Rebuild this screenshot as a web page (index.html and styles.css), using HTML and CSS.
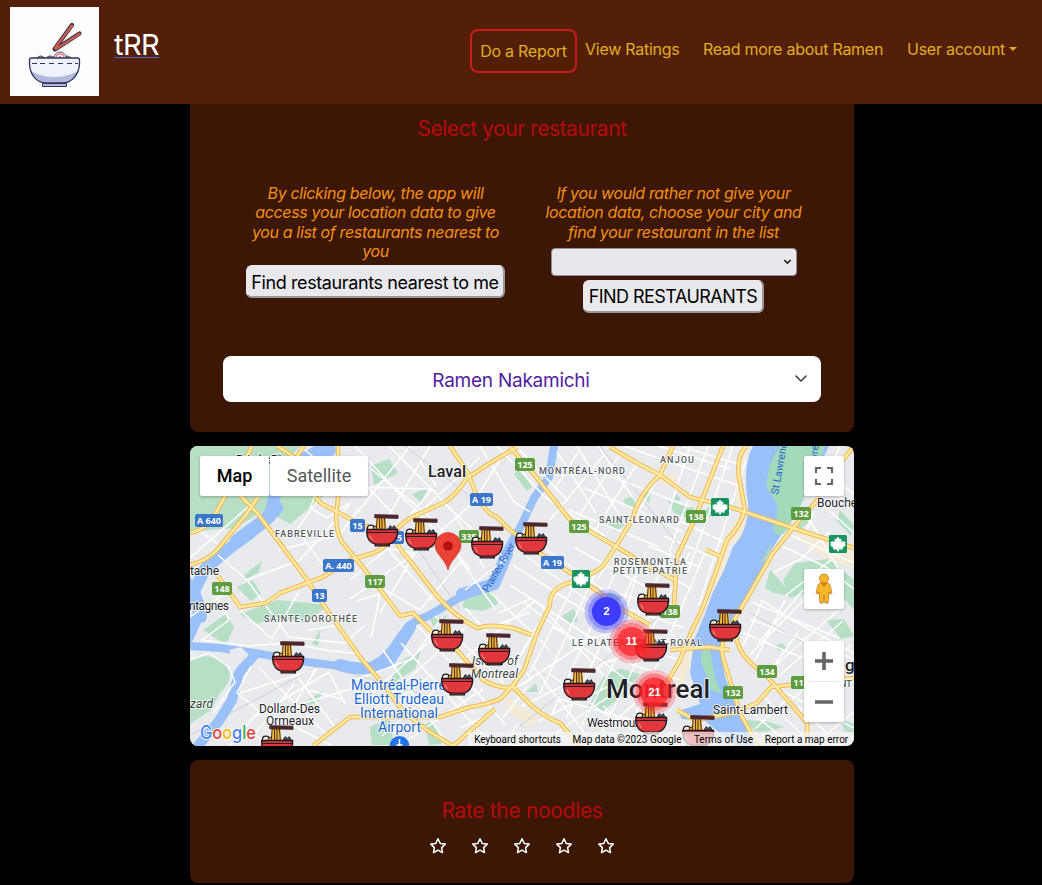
FILE: index.html
```html
<!DOCTYPE html>
<html lang="en">
<head>
<meta charset="utf-8">
<title>tRR</title>
<link rel="stylesheet" href="styles.css">
</head>
<body>
<header class="navbar">
  <a class="logo" href="#">
    <svg width="89" height="89" viewBox="0 0 89 89">
      <rect width="89" height="89" fill="#fdfdfd"/>
      <g stroke-linecap="round"><path d="M44.500 42L62 18M45 42.500L69.500 26.500" stroke="#343047" stroke-width="4.200"/><path d="M45 41L62 18.500M46 42L69.500 26.700" stroke="#ca5b4f" stroke-width="2.400"/></g>
      <path d="M27 51q3-4 8 0M36 51q4-4 9 0M54 51q3-4 7 0" fill="#9aa65f" stroke="#45496a" stroke-width="1"/>
      <circle cx="50" cy="51" r="6" fill="#fff" stroke="#59506d"/><path d="M46 51q0-4 4-4q4 0 4 4M48.500 51q1.500-3 3 0" fill="none" stroke="#e5808a" stroke-width="1.300"/>
      <path d="M19.500 53q0-2 2-2h46q2 0 2 2v4C69 68 61 76 53 76H36C27 76 20 68 19.500 57Z" fill="#eef3fb"/>
      <path d="M20 64Q44 76 69 64Q64 76 53 76H36Q24 75 20 64Z" fill="#b1b9dc"/>
      <path d="M19.500 53q0-2 2-2h46q2 0 2 2v4C69 68 61 76 53 76H36C27 76 20 68 19.500 57Z" fill="none" stroke="#2e345b" stroke-width="1.300"/>
      <path d="M32.500 76.500h24v3h-24z" fill="#b1b9dc" stroke="#2e345b"/><path d="M22 56.500h5m3 0h5m4 0h5m4 0h5m4 0h5m3 0h3" stroke="#2e345b"/>
    </svg>
  </a>
  <a class="brand" href="#">tRR</a>
  <nav class="links">
    <a class="link link-active" href="#">Do a Report</a>
    <a class="link l-ratings" href="#">View Ratings</a>
    <a class="link l-read" href="#">Read more about Ramen</a>
    <a class="link l-user" href="#">User account<i class="caret"></i></a>
  </nav>
</header>
<main class="content">
  <section class="card select-card">
    <h2 class="title">Select your restaurant</h2>
    <div class="choices">
      <div class="choice">
        <p class="hint">By clicking below, the app will access your location data to give you a list of restaurants nearest to you</p>
        <button class="btn btn-near">Find restaurants nearest to me</button>
      </div>
      <div class="choice">
        <p class="hint">If you would rather not give your location data, choose your city and find your restaurant in the list</p>
        <div class="city"><svg width="9" height="6" viewBox="0 0 9 6"><path d="M1.300 1l3.200 3.200L7.700 1" fill="none" stroke="#111" stroke-width="1.400"/></svg></div>
        <button class="btn btn-find">FIND RESTAURANTS</button>
      </div>
    </div>
    <div class="picker"><span class="picked">Ramen Nakamichi</span><svg width="12" height="8" viewBox="0 0 12 8"><path d="M1 1l5 5 5-5" fill="none" stroke="#343a40" stroke-width="1.500" stroke-linecap="round" stroke-linejoin="round"/></svg></div>
  </section>

  <section class="map">
    <svg class="tiles" width="664" height="300" viewBox="190 446 664 300">
      <defs>
        <symbol id="bowl" viewBox="0 0 34 34" overflow="visible">
          <circle cx="5" cy="15" r="3.600" fill="#f5efdf" stroke="#17191d" stroke-width="1.200"/><circle cx="10" cy="15" r="2.600" fill="#e6a532" stroke="#17191d"/>
          <path d="M22 17l3-5 2 2 2-2 3 5z" fill="#47556a" stroke="#17191d"/>
          <path d="M11 3h9l1 14H11z" fill="#f4b63e"/><path d="M11.500 4L10.500 17M14 4v13M16.500 4v13M19 4l1 13" stroke="#3c2511" stroke-width="1"/>
          <path d="M9 .700l24 .500v3.300L9 3.800z" fill="#672d33" stroke="#301a20" stroke-width=".9"/><path d="M10 2.200l22 .400" stroke="#301a20" stroke-width=".6"/>
          <path d="M.800 16h31.700v3.500C32 26 28 30 24 31v1.800H9.500V31C5 30 1 26 .800 19.500z" fill="#e0383d" stroke="#17191d" stroke-width="1.400"/><path d="M1 19h31" stroke="#17191d"/><path d="M10 31h14" stroke="#17191d" stroke-width="1.200"/><path d="M4 22q1 3 3 5" fill="none" stroke="#f49b98"/>
        </symbol>
        <symbol id="leaf" viewBox="0 0 18 18"><rect width="18" height="18" rx="1.500" fill="#17935f"/><path d="M9 2l1.500 2.500L12 4l-.3 4 2-2 .6 1.300 2-.2-.8 2 1 1-3.500 3 .3 1.200-3.600-.5V16H8.300v-2.200l-3.600.5.300-1.200-3.500-3 1-1-.8-2 2 .2.600-1.300 2 2L6 4l1.500.5z" fill="#fff" stroke="#fff" stroke-width=".8"/></symbol>
        <g id="roads">
          <path d="M252 446L240 470L210 523Q200 531 190 533"/><path d="M277 446L296 458L304 446"/><path d="M190 565Q208 560 217 550L245 516L258 497"/>
          <path d="M240 495L258 514L305 577L318 597L360 657L377 677L400 707Q414 721 427 730L453 746"/>
          <path d="M517 447L490 463L467 478Q456 495 445 502L410 518Q396 527 391 540Q382 550 373 553L350 560L323 577L280 593L266 603L240 607L218 576"/>
          <path d="M390 528Q398 549 411 562L433 591Q452 615 477 628Q494 623 520 630"/>
          <path d="M315 497L322 504L360 524L393 535"/>
          <path d="M338 446L338 500Q333 526 342 542L357 560L383 593L400 616L413 613L430 630L457 650L483 680Q500 690 517 687"/>
          <path d="M450 446L468 473L477 497Q487 514 497 517L510 530L541 554L577 577L600 593L623 610L650 625"/>
          <path d="M510 447L537 478L570 520L610 543L643 563L675 580"/>
          <path d="M610 447L637 463L660 475L690 497L730 507L793 528L854 548"/>
          <path d="M673 446L660 475Q638 495 633 518L620 540L603 566Q590 577 563 585Q549 592 550 605L537 633L524 670Q511 689 500 699Q485 705 470 707L440 717L350 717L313 746"/>
          <path d="M495 709L453 746M513 687L533 707Q548 719 560 723L580 746"/>
          <path d="M510 627L532 635"/>
          <path d="M820 497L793 528L773 553L750 593L730 627Q718 644 724 661L740 713L758 746"/>
          <path d="M747 446Q736 455 739 477L745 510Q740 527 727 540L713 580L703 607L690 635L680 660L658 698L639 718"/>
          <path d="M723 446L693 523L677 557L674 605"/>
          <path d="M736 635Q738 657 765 674L790 703L807 723V746"/><path d="M854 678L771 687L757 703L733 713L695 720L677 710"/>
          <path d="M670 650L709 647L730 650M706 550L722 557"/><path d="M854 446L831 475"/>
        </g>
      </defs>
      <rect x="190" y="446" width="664" height="300" fill="#e8eaed"/>
      <g fill="#b6dfc5">
        <path d="M190 446H300L290 458L325 495L290 524L265 510L235 528L205 530L190 535Z"/>
        <path d="M371 466l18-7 9 14-24 12zM412 494l16-6-7 14zM244 575l18-14-3 11-14 8zM237 587l16-7 8 14-10 7zM203 630l23-16 8 13-8 18zM240 614l38-14 50 5-22 18-29-6-20 7zM190 659Q214 650 229 670Q233 680 220 693L211 710L190 724Z"/>
        <path d="M400 662l21-12-6 19-28 18zM464 596l26-10 8 18-15 7-20-3zM430 619l18-4-14 13zM305 702l18-12-4 11-13 6zM312 644l9-16-3 18z"/>
        <path d="M593 699Q600 672 621 669L640 674L625 693L603 711L587 709ZM526 692l10-9 2 9zM562 616l12-7 4 12-10 3zM603 598l8-7 11 7-9 5zM608 525l13-7 3 8-9 5zM623 500l9-4 5 12-9-1zM643 496l8-7-2 15zM668 501l26 7-4 11-16-6zM672 503l5-9 4 6zM697 518l18-16 18 3-16 11zM645 561l9 3-5 11zM514 474l6-5 12 18-5 4z"/>
        <path d="M795 507l10 2 3 14-9 7zM770 570l13 14 8 12-17-3-9-5zM783 580l12-17 34-4 25 21V610l-12-14-25-6-28 8zM826 620l18-1 10 17-13 3zM840 510l14 15-3 11-14-15zM774 646l8-3 5 6-8 2zM744 720l25 2 15 5-26 7zM842 720l12 4v14l-10-8z"/>
        <path d="M370 727l18-8 7 26H372zM425 724l9-3 8 23-13 1z"/>
      </g>
      <g fill="#f4ead8"><path d="M748 446L741 480L745 510L738 520L754 526L728 547L729 567L713 590L697 617L690 665L682 687L675 680L690 636L704 600L723 540L739 516L733 480Z"/><path d="M791 528l12 5 51 19v17l-22-8-24-13zM506 694l16 14 18 11-7 8-27-15zM655 475l20-2 3 13-15-2z"/></g>
      <path d="M753 446Q742 466 748 503Q749 529 733 547L724 570L713 592Q703 620 694 640L690 673L700 704L678 711L682 719L705 721L736 746H754L749 732L726 680L720 652L731 626L752 592L767 557L803 500L829 446Z" fill="#9ac0fa"/>
      <g fill="none" stroke="#9ac0fa" stroke-linecap="round" stroke-linejoin="round">
        <path d="M324 446Q314 455 295 462Q282 472 275 494L270 516L249 534L226 551L205 569L194 591L199 613L187 639" stroke-width="12"/>
        <path d="M237 541L264 521L276 508" stroke-width="14"/>
        <path d="M190 646L220 648L255 653L300 661Q335 666 365 668Q383 663 395 645Q410 620 426 617L459 598Q481 589 494 580L508 548L520 528L534 498L549 477L554 446" stroke-width="8"/>
        <path d="M340 665Q370 674 390 660L410 627M462 594L494 584L507 554" stroke-width="12"/>
        <path d="M255 654L239 673L232 700L219 721L198 746" stroke-width="10"/>
        <path d="M185 580Q200 600 201 617M317 458l13-8" stroke-width="12"/>
      </g>
      <path d="M229 650l12-3 8 8-12 11zM225 656l9 4-3 8z" fill="#e8eaed"/>
      <path d="M780 446Q765 468 767 488L777 504Q779 512 773 530Q779 539 787 530L814 480L825 446ZM701 661Q701 643 710 650L715 678L722 694L711 690ZM760 563l12-21-3 11-6 9z" fill="#a4d9ba"/>
      <g fill="none" stroke="#fff" stroke-width="1.500" stroke-linejoin="round">
        <path d="M190 558L248 507M200 531L219 545M218 555L247 580L300 560L350 504M247 580L289 637L345 643L365 625M190 617L225 593M217 597L229 620L202 640L248 646L288 643L325 650L360 654M190 660L209 653L228 666L235 682L213 713M320 497L297 530L325 568M278 550L340 535L358 509M286 480L318 488L310 508L327 518L350 503M305 450L350 487L360 468M240 610L272 639L299 591M308 630L334 626"/>
        <path d="M251 666L237 693L259 711L230 745M240 693L316 669L293 706L270 737M259 668L302 710L327 735M256 716L329 672L345 704M297 676L334 726M309 690L345 700M250 740L294 684M243 728L273 746M304 703L361 686M275 717L331 745"/>
        <path d="M355 446L405 500L446 540L496 610M369 467L436 522L470 570M389 446L453 511L484 568M410 446L352 519M430 446L374 540M359 487L432 489L385 546L433 600M350 599L422 548L474 502L505 451M378 586L420 610L462 560M436 486L420 461M350 469L400 521M416 516L480 457M440 500L506 559L465 590M350 580L387 549L415 553L380 613M357 601L380 594L371 638"/>
        <path d="M350 682L412 659L443 616M383 650L446 742M401 643L485 738M417 625L506 725M435 616L504 683M362 702L437 635M370 713L465 628M382 736L470 660M399 746L483 689M404 695L433 674M442 680L474 713M459 663L536 600M465 608L532 679M490 592L550 650M498 613L530 599M482 631L530 612"/>
        <path d="M480 446L514 502L530 512M497 446L546 498L605 536M520 450L568 501M557 452L596 513M577 446L620 516M598 446L633 498M618 457L581 513M637 464L592 535M659 477L598 579M555 489L578 452M550 520L603 456M569 510L659 547M584 488L637 510L683 532M600 472L690 507M624 446L667 461L740 486M658 446L731 469M690 446L668 515M708 446L669 552M733 446L688 572M746 460L699 605M683 447L742 465"/>
        <path d="M533 540L604 590L652 603M526 556L618 622L675 636M513 565L646 650L680 660M510 585L633 665L680 680M523 602L640 690L693 697M542 607L604 676M556 594L520 656M577 579L530 673M599 565L540 694M619 564L551 716M646 552L566 718M671 552L582 725M690 552L602 732M704 555L635 716M575 548L668 599M623 555L693 589M649 546L701 568M664 536L716 559M680 521L726 543M638 570L621 629L582 642L552 627M657 583L640 650L596 666"/>
        <path d="M532 665L590 740M518 687L595 636M522 706L603 666M538 721L609 686M553 735L627 684M560 699L655 727M550 674L615 721M603 706L640 737M610 726L638 700M516 725L506 746M503 718L527 687M467 735L520 746M460 728L491 714M630 609L685 628M616 625L689 648"/>
        <path d="M761 600L794 621L854 653M750 619L808 642L854 659M741 632L800 657M751 602L839 638M780 545L826 567L854 589M790 535L854 563M803 508L839 570M819 501L854 533M774 572L801 559L829 532M785 596L831 560M757 645L803 590M750 655L827 576M769 671L842 607M780 675L843 621M792 700L851 645M803 722L854 679M820 739L854 712M743 646L762 602M755 661L785 600M765 678L799 631M780 690L854 728M798 706L841 746M763 696L806 739M747 708L780 736L798 746M755 729L786 700M840 446L827 475L854 494M824 488L854 505M805 535L814 511"/>
      </g>
      <g fill="none" stroke="#aeb8bf" stroke-width=".5"><path d="M405 446L520 535M190 735L320 665L420 693M600 446L680 547M520 726L675 604M750 613L854 670M400 523L460 610"/></g>
      <use href="#roads" fill="none" stroke="#f3b850" stroke-width="4.600" stroke-linejoin="round"/><use href="#roads" fill="none" stroke="#fdeaa0" stroke-width="2.600" stroke-linejoin="round"/>
      <g class="badges">
        <g fill="#3b76ca"><rect x="195" y="514" width="28" height="13" rx="2"/><rect x="350" y="519" width="15" height="13" rx="2"/><rect x="323" y="559" width="31" height="13" rx="2"/><rect x="312" y="589" width="15" height="13" rx="2"/><rect x="390" y="531" width="14" height="13" rx="2"/><rect x="470" y="493" width="23" height="13" rx="2"/><rect x="541" y="556" width="23" height="13" rx="2"/></g>
        <g fill="#5e9c40"><rect x="515" y="458" width="20" height="13" rx="2"/><rect x="569" y="520" width="20" height="13" rx="2"/><rect x="365" y="575" width="20" height="13" rx="2"/><rect x="212" y="582" width="20" height="13" rx="2"/><rect x="459" y="530" width="20" height="13" rx="2"/><rect x="686" y="510" width="20" height="13" rx="2"/><rect x="791" y="507" width="20" height="13" rx="2"/><rect x="660" y="605" width="20" height="13" rx="2"/><rect x="757" y="665" width="20" height="13" rx="2"/><rect x="723" y="686" width="20" height="13" rx="2"/><rect x="791" y="676" width="20" height="13" rx="2"/></g>
        <text x="209" y="524">A 640</text><text x="357.500" y="529">15</text><text x="338.500" y="569">A. 440</text><text x="319.500" y="599">13</text><text x="397" y="541">15</text><text x="481.500" y="503">A 19</text><text x="552.500" y="566">A 19</text><text x="525" y="468">125</text><text x="579" y="530">125</text><text x="375" y="585">117</text><text x="222" y="592">148</text><text x="469" y="540">335</text><text x="696" y="520">138</text><text x="801" y="517">132</text><text x="670" y="615">138</text><text x="767" y="675">134</text><text x="733" y="696">132</text><text x="801" y="686">112</text>
      </g>
      <use href="#leaf" x="711" y="498" width="18" height="18"/><use href="#leaf" x="829" y="535" width="18" height="18"/><use href="#leaf" x="572" y="570" width="18" height="18"/>
      <g class="towns">
        <text x="236" y="464" textLength="56">Bois-des-Filion</text><text x="190" y="575" textLength="29">tache</text><text x="189" y="610" textLength="40">ntagnes</text><text x="259" y="713" textLength="61">Dollard-Des</text><text x="266" y="725" textLength="48">Ormeaux</text><text x="817" y="507">Bouche</text><text x="713" y="714" textLength="75">Saint-Lambert</text><text x="587" y="727" textLength="58">Westmount</text><text x="845" y="671" class="town-lg">g</text>
      </g>
      <g class="areas">
        <text x="275" y="537" textLength="59">FABREVILLE</text><text x="264" y="621.500" textLength="93">SAINTE-DOROTHÉE</text><text x="539" y="474" textLength="86">MONTRÉAL-NORD</text><text x="660" y="463" textLength="34">ANJOU</text><text x="599" y="523" textLength="80">SAINT-LEONARD</text><text x="614" y="565" textLength="72">ROSEMONT-LA</text><text x="613" y="574" textLength="74">PETITE-PATRIE</text><text x="572" y="646" textLength="130">LE PLATEAU-MONT-ROYAL</text><text x="840" y="687">NT</text>
      </g>
      <text class="laval" x="428" y="477" textLength="38" lengthAdjust="spacingAndGlyphs">Laval</text><text class="montreal" x="606" y="698" textLength="104" lengthAdjust="spacingAndGlyphs">Montreal</text>
      <g class="airport"><text x="351" y="690" textLength="95">Montréal-Pierre</text><text x="354" y="704" textLength="90">Elliott Trudeau</text><text x="360" y="718" textLength="78">International</text><text x="378" y="731.500" textLength="43">Airport</text></g>
      <g class="land"><text x="472" y="665" textLength="46">Island of</text><text x="471" y="677.500" textLength="47">Montreal</text><text x="190" y="708" textLength="23">zard</text></g>
      <g class="river"><text transform="translate(488 593)rotate(-60)" textLength="55">Prairies River</text><text transform="translate(778 495)rotate(-80)" textLength="58">St Lawrence</text><text transform="translate(817 462)rotate(-85)">wrence</text></g>
      <circle cx="399.500" cy="746" r="10" fill="#2373e8"/><path d="M399.500 739v8m-3-2h6" stroke="#fff" stroke-width="1.500"/>
      <g>
        <use href="#bowl" x="366" y="514" width="33" height="33"/><use href="#bowl" x="405" y="518" width="33" height="33"/><use href="#bowl" x="471" y="526" width="33" height="33"/><use href="#bowl" x="515" y="522" width="33" height="33"/><use href="#bowl" x="272" y="641" width="33" height="33"/><use href="#bowl" x="431" y="619" width="33" height="33"/><use href="#bowl" x="478" y="633" width="33" height="33"/><use href="#bowl" x="441" y="663" width="33" height="33"/><use href="#bowl" x="563" y="668" width="33" height="33"/><use href="#bowl" x="637" y="583" width="33" height="33"/><use href="#bowl" x="635" y="629" width="33" height="33"/><use href="#bowl" x="635" y="702" width="33" height="33"/><use href="#bowl" x="261" y="725" width="33" height="33"/><use href="#bowl" x="709" y="609" width="33" height="33"/><use href="#bowl" x="682" y="715" width="33" height="33"/>
      </g>
      <path d="M448 570C446 560 435 554 435 545.500A13 13 0 0 1 461 545.500C461 554 450 560 448 570Z" fill="#ea4335" stroke="#d13b31" stroke-width=".7"/><circle cx="448" cy="546" r="4.800" fill="#b11313"/>
      <g fill="#3333ff"><circle cx="606.500" cy="611.500" r="22" opacity=".25"/><circle cx="606.500" cy="611.500" r="18.500" opacity=".3"/><circle cx="606.500" cy="611.500" r="14.500" opacity=".9"/></g>
      <g fill="#ff2028"><circle cx="631.500" cy="641.500" r="22" opacity=".25"/><circle cx="631.500" cy="641.500" r="18.500" opacity=".35"/><circle cx="631.500" cy="641.500" r="14.500" opacity=".72"/><circle cx="654.500" cy="692" r="22" opacity=".25"/><circle cx="654.500" cy="692" r="18.500" opacity=".35"/><circle cx="654.500" cy="692" r="14.500" opacity=".75"/></g>
      <g class="counts"><text x="606.500" y="615">2</text><text x="631.500" y="645">11</text><text x="654.500" y="696">21</text></g>
      <g class="google"><text x="200" y="739" textLength="56" lengthAdjust="spacingAndGlyphs"><tspan fill="#4285f4">G</tspan><tspan fill="#ea4335">o</tspan><tspan fill="#fbbc04">o</tspan><tspan fill="#4285f4">g</tspan><tspan fill="#34a853">l</tspan><tspan fill="#ea4335">e</tspan></text></g>
    </svg>
    <div class="map-type"><span class="type-on">Map</span><span class="type-off">Satellite</span></div>
    <div class="ctl ctl-full"><svg width="20" height="20" viewBox="0 0 20 20"><path d="M2 7V2h5M13 2h5v5M18 13v5h-5M7 18H2v-5" fill="none" stroke="#666" stroke-width="2.200"/></svg></div>
    <div class="ctl ctl-man"><svg width="20" height="32" viewBox="0 0 20 32"><path d="M4 12q1-3 6-3t6 3l2 8-2 1-1-2-1 11h-3l-1-8-1 8H6L5 19l-1 2-2-1z" fill="#f7b529" stroke="#b57b16" stroke-width=".8"/><circle cx="10" cy="5.500" r="4.500" fill="#f7b529" stroke="#b57b16" stroke-width=".8"/><path d="M7 10h6l-3 4z" fill="#d87713"/></svg></div>
    <div class="ctl ctl-zoom"><svg width="40" height="81" viewBox="0 0 40 81"><path d="M11 20h18M20 11v18M11 61h18" stroke="#666" stroke-width="3.600"/><path d="M5 40.500h30" stroke="#e6e6e6"/></svg></div>
    <div class="terms"><span class="t1">Keyboard shortcuts</span><span class="t2">Map data ©2023 Google</span><span class="t3">Terms of Use</span><span class="t4">Report a map error</span></div>
  </section>

  <section class="card rate-card">
    <h2 class="title title-rate">Rate the noodles</h2>
    <div class="stars">
      <svg viewBox="0 0 18 18"><path d="M9 1.800l2.200 4.600 5 .7-3.600 3.500.9 5L9 13.200l-4.500 2.400.9-5L1.800 7.100l5-.7z"/></svg>
      <svg viewBox="0 0 18 18"><path d="M9 1.800l2.200 4.600 5 .7-3.600 3.500.9 5L9 13.200l-4.500 2.400.9-5L1.800 7.100l5-.7z"/></svg>
      <svg viewBox="0 0 18 18"><path d="M9 1.800l2.200 4.600 5 .7-3.600 3.500.9 5L9 13.200l-4.500 2.400.9-5L1.800 7.100l5-.7z"/></svg>
      <svg viewBox="0 0 18 18"><path d="M9 1.800l2.200 4.600 5 .7-3.600 3.500.9 5L9 13.200l-4.500 2.400.9-5L1.800 7.100l5-.7z"/></svg>
      <svg viewBox="0 0 18 18"><path d="M9 1.800l2.200 4.600 5 .7-3.600 3.500.9 5L9 13.200l-4.500 2.400.9-5L1.800 7.100l5-.7z"/></svg>
    </div>
  </section>
</main>
</body>
</html>
```
FILE: styles.css
```css
* { box-sizing: border-box; }
body { margin: 0; background: #000; font-family: Inter, sans-serif; height: 885px; overflow: hidden; }
a { text-decoration: none; }
.navbar { height: 104px; background: #541f08; display: flex; align-items: flex-start; padding: 7px 26px 0 10px; }
.logo { width: 89px; height: 89px; }
.logo svg { display: block; }
.brand { margin: 19px 0 0 15px; height: 32px; border-bottom: 1px solid #4668c5; font-size: 29px; line-height: 37px; letter-spacing: -.6px; color: #fff; }
.links { margin-left: auto; margin-top: 22px; display: flex; align-items: flex-start; }
.link { color: #e0ad25; font-size: 16px; line-height: 24px; padding: 8px 0; white-space: nowrap; letter-spacing: -.26px; }
.link-active { border: 2px solid #c51c1c; border-radius: 8px; width: 107px; height: 44px; text-align: center; margin-right: 8px; }
.l-ratings { width: 94px; margin-right: 24px; }
.l-read { width: 180px; margin-right: 24px; }
.l-user { width: 109px; }
.caret { display: inline-block; margin-left: 4px; vertical-align: 4px; border: 4px solid transparent; border-top-color: #e0ad25; border-bottom: 0; }
.content { width: 664px; margin-left: 190px; }
.card { background: #3c1706; }
.title { margin: 0; text-align: center; color: #b80a0a; font-weight: 400; font-size: 21px; line-height: 26px; letter-spacing: -.45px; }
.title-rate { letter-spacing: -.32px; }
.select-card { height: 328px; border-radius: 0 0 8px 8px; padding: 12px 33px 0; }
.choices { display: flex; justify-content: space-between; padding: 42px 15px 0 20px; height: 214px; }
.choice { width: 265px; display: flex; flex-direction: column; align-items: center; }
.hint { margin: 0; padding: 0 3px 4px; text-align: center; font-style: italic; font-size: 16px; line-height: 19.300px; letter-spacing: -.35px; color: #f68e14; }
.btn { height: 33px; border: solid; border-width: 1px 2px 2px 1px; border-color: #e9e9ed #98989c #98989c #e9e9ed; border-radius: 6px; background: #e9e9ed; padding: 2px 0 0; font-family: inherit; font-size: 18px; white-space: nowrap; color: #000; }
.btn-near { width: 259px; letter-spacing: -.4px; }
.btn-find { width: 181px; margin-top: 4px; letter-spacing: -.55px; }
.city { width: 246px; height: 28px; margin-top: 2px; background: #e9e9ed; border: 1px solid #8f8f9d; border-radius: 4px; display: flex; justify-content: flex-end; align-items: center; padding-right: 4px; }
.picker { padding-right: 14px; height: 46px; border-radius: 8px; background: #fff; display: flex; align-items: center; }
.picked { flex: 1; padding: 3px 0 0 4px; color: #51219f; font-size: 19px; letter-spacing: -.25px; text-align: center; }
.map { position: relative; width: 664px; height: 300px; margin-top: 14px; border-radius: 8px; overflow: hidden; font-family: Roboto, sans-serif; }
.tiles { display: block; }
.badges text, .counts text { fill: #fff; font: 700 9px "Open Sans", sans-serif; text-anchor: middle; }
.counts text { font: 700 11px "Liberation Sans", sans-serif; }
.towns text { fill: #202124; font: 12px Roboto, sans-serif; }
.towns .town-lg { font-size: 17px; font-weight: 500; }
.areas text { fill: #555a60; font: 500 9px Roboto, sans-serif; }
.towns text, .areas text, .airport text, .land text, .laval, .montreal { stroke: #fff; stroke-width: 2px; stroke-opacity: .75; paint-order: stroke; stroke-linejoin: round; }
.laval { font: 500 16px Roboto, sans-serif; fill: #202124; }
.montreal { font: 500 26px Roboto, sans-serif; fill: #202124; }
.airport text { fill: #1967d2; font: 14px Roboto, sans-serif; }
.land text { fill: #3c4043; font: italic 12px Roboto, sans-serif; }
.river text { fill: #2464cc; font: 10.500px Roboto, sans-serif; }
.google text { font: 500 18px Inter, sans-serif; stroke: #fff; stroke-width: 1.500px; paint-order: stroke; }
.map-type { position: absolute; left: 10px; top: 10px; height: 40px; display: flex; line-height: 40px; font-size: 18px; box-shadow: 0 1px 3px #0004; border-radius: 2px; }
.map-type span { background: #fff; text-align: center; border-radius: 2px; }
.type-on { width: 69px; font-weight: 500; color: #000; }
.type-off { width: 98px; margin-left: 1px; color: #565656; }
.ctl { position: absolute; left: 614px; width: 40px; height: 40px; background: #fff; border-radius: 2px; box-shadow: 0 1px 3px #0004; display: flex; align-items: center; justify-content: center; }
.ctl-full { top: 10px; }
.ctl-man { top: 123px; }
.ctl-zoom { top: 195px; height: 81px; }
.terms { position: absolute; right: 0; bottom: 0; display: flex; height: 14px; font-size: 10px; line-height: 15px; color: #000; text-align: center; white-space: nowrap; }
.terms span { background: #f5f5f5b8; }
.t1 { width: 99px; }
.t2 { width: 120px; }
.t3 { width: 72px; border-left: 1px solid #ccca; }
.t4 { width: 95px; }
.rate-card { height: 123px; margin-top: 14px; border-radius: 8px; padding-top: 38px; }
.stars { display: flex; justify-content: center; gap: 24px; margin-top: 13px; }
.stars svg { width: 18px; height: 18px; fill: none; stroke: #fff; stroke-width: 1.500; stroke-linejoin: round; }
```
